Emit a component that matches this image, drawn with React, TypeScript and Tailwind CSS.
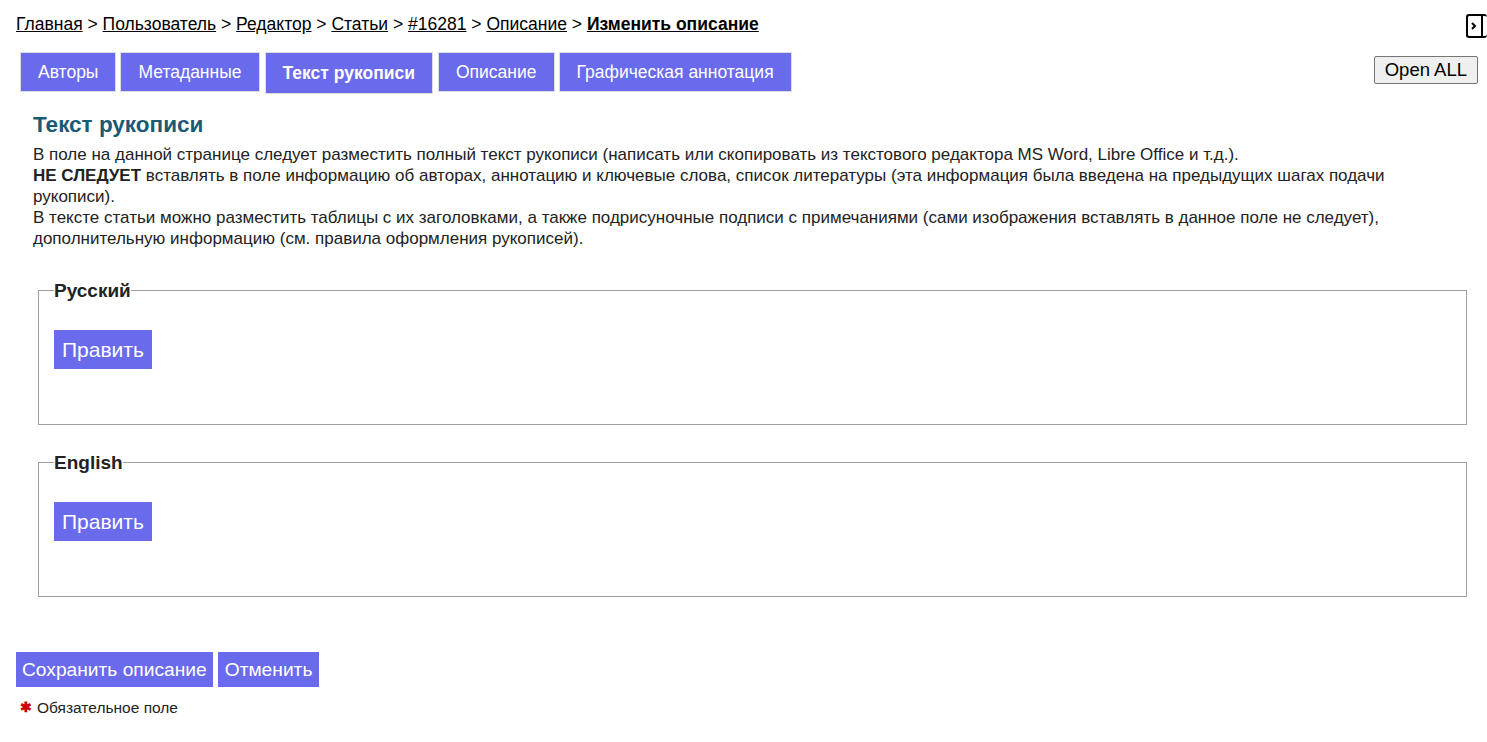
import React from "react";

const tabs = [
  { label: "Авторы", active: false },
  { label: "Метаданные", active: false },
  { label: "Текст рукописи", active: true },
  { label: "Описание", active: false },
  { label: "Графическая аннотация", active: false },
];

function Fieldset({ legend }: { legend: string }) {
  return (
    <fieldset className="border border-[#a0a0a0] ml-[38px] mr-[20px] px-[15px] pt-[30px] pb-[55px]">
      <legend className="text-[19px] font-bold text-[#222] px-0 leading-none">{legend}</legend>
      <button className="bg-[#6a6aec] text-white text-[21px] px-[8px] h-[39px] leading-none">Править</button>
    </fieldset>
  );
}

export default function App() {
  return (
    <div className="relative min-h-[742px] bg-white text-[#222]" style={{ fontFamily: '"Liberation Sans", Arial, sans-serif' }}>
      <div className="absolute right-0 top-[14px] w-[21px] h-[24px] border-2 border-black rounded-[3px] border-r-0 flex items-center justify-start pl-[2px]">
        <svg width="8" height="10" viewBox="0 0 8 10"><path d="M2 2 L5 5 L2 8" stroke="black" strokeWidth="2" fill="none" /></svg>
        <div className="ml-[3px] w-[2px] h-full bg-black" />
      </div>
      <div className="pt-[11px] pl-[16px] text-[17.5px] text-black">
        <a className="underline">Главная</a> &gt; <a className="underline">Пользователь</a> &gt; <a className="underline">Редактор</a> &gt; <a className="underline">Статьи</a> &gt; <a className="underline">#16281</a> &gt; <a className="underline">Описание</a> &gt; <span className="underline font-bold">Изменить описание</span>
      </div>
      <div className="flex items-start justify-between pl-[20px] pr-[9px] mt-[15px]">
        <div className="flex items-start gap-[4px]">
          {tabs.map((t) => (
            <div
              key={t.label}
              className={`border border-[#dddddd] bg-[#6a6aec] text-white text-[17.5px] px-[17px] flex items-center ${t.active ? "h-[42px] font-bold ml-[1px] mr-[1px]" : "h-[40px]"}`}
            >
              {t.label}
            </div>
          ))}
        </div>
        <button className="mt-[4px] bg-[#efefef] border border-[#767676] rounded-[2px] text-black text-[18.5px] px-[10px] h-[28px] leading-none">Open ALL</button>
      </div>
      <div className="pl-[33px] pr-[40px] mt-[17px]">
        <h2 className="text-[22.5px] font-bold text-[#1a5a75] leading-[28px]">Текст рукописи</h2>
        <div className="text-[17px] leading-[21px] mt-[5px]">
          В поле на данной странице следует разместить полный текст рукописи (написать или скопировать из текстового редактора MS Word, Libre Office и т.д.).
          <br />
          <b>НЕ СЛЕДУЕТ</b> вставлять в поле информацию об авторах, аннотацию и ключевые слова, список литературы (эта информация была введена на предыдущих шагах подачи рукописи).
          <br />
          В тексте статьи можно разместить таблицы с их заголовками, а также подрисуночные подписи с примечаниями (сами изображения вставлять в данное поле не следует), дополнительную информацию (см. правила оформления рукописей).
        </div>
      </div>
      <div className="mt-[32px] flex flex-col gap-[28px]">
        <Fieldset legend="Русский" />
        <Fieldset legend="English" />
      </div>
      <div className="pl-[16px] mt-[55px] flex gap-[5px]">
        <button className="bg-[#6a6aec] text-white text-[19.2px] px-[6px] h-[35px] leading-none">Сохранить описание</button>
        <button className="bg-[#6a6aec] text-white text-[19.2px] px-[7px] h-[35px] leading-none">Отменить</button>
      </div>
      <div className="pl-[20px] mt-[9px] text-[15.5px] flex items-center gap-[5px] text-[#222]">
        <span className="text-[#cc0000] text-[14px] font-bold">✱</span>
        <span>Обязательное поле</span>
      </div>
    </div>
  );
}
